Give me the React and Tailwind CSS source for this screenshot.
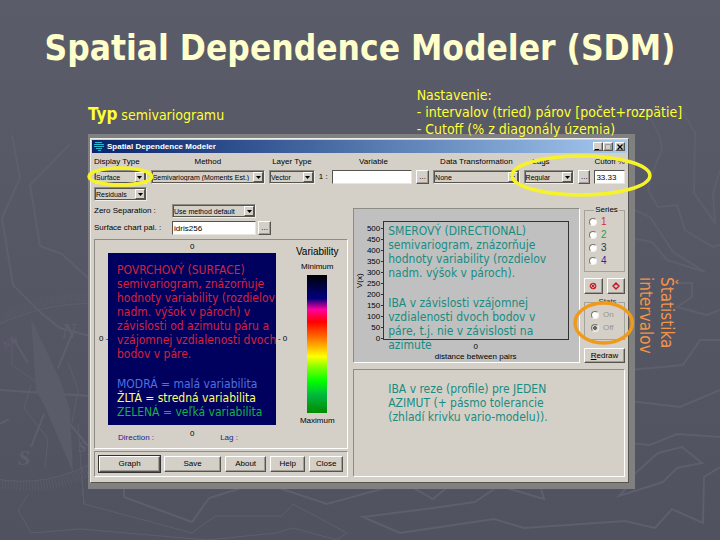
import React from 'react';

const annotation = 'font-["DejaVu_Sans_Condensed","DejaVu_Sans",sans-serif]';

const Ellipse = ({ className, color }) => (
    <svg
        className={`absolute pointer-events-none overflow-visible z-10 ${className}`}
        viewBox="0 0 100 100"
        preserveAspectRatio="none"
        aria-hidden="true"
    >
        <ellipse cx="50" cy="50" rx="50" ry="50" fill="none" stroke={color} strokeWidth="3.5" vectorEffect="non-scaling-stroke" />
    </svg>
);

const Select = ({ label, value, className = '' }) => (
    <div className={`relative h-[14px] border border-t-[#8f8c86] border-l-[#8f8c86] border-b-[#efede8] border-r-[#efede8] ${className}`}>
        <select
            aria-label={label}
            className="block w-full h-full appearance-none bg-[#d4d0c8] border border-[#56544f] text-[7px] leading-none overflow-hidden"
        >
            <option>{value}</option>
        </select>
        <span className="absolute top-px right-px bottom-px w-[10px] bg-[#d4d0c8] border border-t-white border-l-white border-b-[#56544f] border-r-[#56544f] flex items-center justify-center pointer-events-none">
            <svg width="5" height="3" viewBox="0 0 5 3"><path d="M0 0h5L2.5 3z" fill="#000" /></svg>
        </span>
    </div>
);

const Button = ({ children, className = '', ...rest }) => (
    <button
        type="button"
        className={`bg-[#d4d0c8] border border-t-white border-l-white border-b-[#56544f] border-r-[#56544f] shadow-[inset_-1px_-1px_0_#a09d97] flex items-center justify-center leading-none ${className}`}
        {...rest}
    >
        {children}
    </button>
);

const input = 'block w-full min-w-0 h-[14px] bg-white border border-t-[#56544f] border-l-[#56544f] border-b-[#e8e6e0] border-r-[#e8e6e0] pl-px leading-none';
const panel = 'border border-t-[#8f8c86] border-l-[#8f8c86] border-b-white border-r-white';

const Background = () => (
    <svg className="absolute inset-0 w-full h-full -z-10" viewBox="0 0 720 540" preserveAspectRatio="xMidYMid slice" fill="none" stroke="#5e5f6d" aria-hidden="true">
        <path d="M12 135L20 178L2 218L13 285L40 312L60 328L90 336" strokeWidth="2" />
        <path d="M70 144L30 185L40 246L62 254L90 280" strokeWidth="2" />
        <path d="M0 390L90 396M31 447L44 414M58 368L72 334M14 340L28 363M70 424L88 446M0 424L9 419" strokeWidth="2" />
        <path d="M12 335L12 365L38 383M68 362L78 390L72 423M31 385L24 408L48 439L45 468M78 424L84 505" />
        {/* compass ring */}
        <path d="M-20 334Q40 288 100 300" stroke="#5a5b68" strokeWidth="9" strokeDasharray="1 2" />
        <path d="M-10 482Q50 496 100 465" stroke="#5a5b68" strokeWidth="10" strokeDasharray="1 2" />
        <path d="M-20 334Q40 300 100 304M-10 478Q50 490 100 458" />
        {/* compass needle */}
        <path d="M31 318L36 390L45 407L73 472L70 410L60 380Z" fill="#5b5c69" stroke="none" />
        <g fill="#5e5f6d" stroke="none" className="font-['Liberation_Serif',serif] font-bold italic">
            <text x="62" y="338" fontSize="20">N</text>
            <text x="18" y="465" fontSize="22">S</text>
            <text x="78" y="452" fontSize="15">S</text>
            <text x="5" y="349" fontSize="10" transform="rotate(-28 5 349)">NW</text>
        </g>
        {/* coast lines */}
        <path d="M124 488L124 497L192 522L209 498L251 485M270 485L327 504L396 485M408 485L433 499L450 485M500 485L475 502L433 508L363 517L400 533L494 519L524 528L625 521L655 528L672 509L703 523L704 477L720 467M500 486L544 499L540 485" strokeWidth="2" />
        <path d="M647 110L660 137L662 150L652 173L648 190L658 207L677 205L685 230L713 247L720 245M683 112L695 133L694 193L715 223L713 193L720 170" strokeWidth="2" />
        <path d="M630 208L650 217L673 252L705 272L667 260L652 242L630 238M677 283L692 283L692 297L677 307L707 315L720 310" strokeWidth="2" />
        <path d="M630 370L683 365L700 340L720 340M630 401L680 407L720 390M630 443L650 445L677 434L720 437M630 478L658 453L682 447L702 463L677 468L663 482L619 496L629 485" strokeWidth="2" />
        <path d="M82 480L84 504L192 533L215 516L282 516L293 504L347 533L337 540M31 533L18 510L28 495M31 533L80 529L207 540L276 533L293 528L337 540" />
    </svg>
);

const yTicks = [500, 450, 400, 350, 300, 250, 200, 150, 100, 50, 0];

const series = [
    { id: 1, color: 'text-[#d02f2f]' },
    { id: 2, color: 'text-[#2f9a3c]' },
    { id: 3, color: 'text-[#303030]' },
    { id: 4, color: 'text-[#2c2ca0]' },
];

const radio = 'appearance-none w-2 h-2 rounded-full bg-white border border-t-[#77756f] border-l-[#77756f] border-b-[#f2f0ea] border-r-[#f2f0ea]';

const MarkIcon = ({ cross }) => (
    <svg width="8" height="8" viewBox="0 0 8 8" fill="none" stroke="#c4202c" strokeWidth="1.5" aria-hidden="true">
        {cross ? (
            <>
                <circle cx="4" cy="4" r="2.8" strokeWidth="1.1" />
                <path d="M2.2 2.2L5.8 5.8M5.8 2.2L2.2 5.8" strokeWidth="1.1" />
            </>
        ) : (
            <path d="M4 1L7 4L4 7L1 4Z" />
        )}
    </svg>
);

const Toolbar = () => (
    <div className="grid grid-cols-[53fr_115fr_46fr_94fr_13fr_87fr_102fr] gap-x-1 text-center">
        <div>
            <div className="h-4 leading-4 text-left whitespace-nowrap">Display Type</div>
            <div className="relative">
                <Select label="Display Type" value="Surface" />
                <Ellipse className="-left-[5px] -top-[2px] w-[119%] h-[17px]" color="#f7f32a" />
            </div>
        </div>
        <div>
            <div className="h-4 leading-4">Method</div>
            <Select label="Method" value="Semivariogram (Moments Est.)" />
        </div>
        <div>
            <div className="h-4 leading-4 whitespace-nowrap">Layer Type</div>
            <Select label="Layer Type" value="Vector" />
        </div>
        <div>
            <label htmlFor="variable" className="block h-4 leading-4 pl-4">Variable</label>
            <div className="flex items-center gap-1">
                <span className="whitespace-nowrap">1 :</span>
                <input id="variable" className={input} />
            </div>
        </div>
        <Button className="h-[14px] mt-4" aria-label="Browse variable">...</Button>
        <div>
            <div className="h-4 leading-4 whitespace-nowrap">Data Transformation</div>
            <Select label="Data Transformation" value="None" />
        </div>
        <div className="relative grid grid-cols-[54fr_13fr_27fr] gap-x-1">
            <div>
                <div className="h-4 leading-4 pr-4">Lags</div>
                <Select label="Lags" value="Regular" />
            </div>
            <Button className="h-[14px] mt-4" aria-label="Lag options">...</Button>
            <div>
                <label htmlFor="cutoff" className="flex justify-end h-4 leading-4 whitespace-nowrap">Cutoff %</label>
                <input id="cutoff" className={input} defaultValue="33.33" />
            </div>
            <Ellipse className="-left-[12px] top-[2px] w-[136%] h-[39px]" color="#f7f32a" />
        </div>
    </div>
);

const SurfaceChart = () => (
    <div className={`${panel} flex h-[210px] pl-1`}>
        <div className="grid grid-cols-[9px_1fr_11px] grid-rows-[13px_172px_22px] flex-1 items-center text-center whitespace-nowrap">
            <span className="col-start-2 leading-3">0</span>
            <span className="col-start-1 text-left">0 -</span>
            <div className={`${annotation} bg-[#00005e] h-full text-left text-[12px] leading-[14px] pl-[9px] pt-[10px] flex flex-col`}>
                <p className="text-[#d8203c]">
                    POVRCHOVÝ (SURFACE)<br />
                    semivariogram, znázorňuje<br />
                    hodnoty variability (rozdielov<br />
                    nadm. výšok v pároch) v<br />
                    závislosti od azimutu páru a<br />
                    vzájomnej vzdialenosti dvoch<br />
                    bodov v páre.
                </p>
                <p className="text-[#5070e0] mt-4">MODRÁ = malá variabilita</p>
                <p className="text-[#ffff66]">ŽLTÁ = stredná variabilita</p>
                <p className="text-[#18b048]">ZELENÁ = veľká variabilita</p>
            </div>
            <span className="text-right">- 0</span>
            <div className="col-start-2 grid grid-cols-3 h-full leading-[18px]">
                <span className="text-[#23238e] pt-1">Direction :</span>
                <span>0</span>
                <span className="text-[#23238e] text-left pt-1">Lag :</span>
            </div>
        </div>
        <div className="w-[60px] flex flex-col items-center pt-1">
            <span className="text-[10px] leading-[14px] pt-px">Variability</span>
            <span className="leading-4">Minimum</span>
            <div className="w-5 h-[138px] bg-[linear-gradient(#000_0%,#00005e_12%,#00007a_17%,#ff00a0_25%,#ff0000_34%,#ff8000_47%,#ffff00_59%,#80ff00_67%,#00ff00_77%,#00b840_87%,#008a00_100%)]"></div>
            <span className="leading-4">Maximum</span>
        </div>
    </div>
);

const DirectionalChart = () => (
    <div className={`${panel} bg-[#c0c0c0] h-[155px] pl-[2px] pt-3 pr-[10px]`}>
        <div className="flex h-[119px]">
            <span className="[writing-mode:vertical-rl] rotate-180 text-center w-2 leading-2">V(x)</span>
            <div className="w-[19px] -mb-1 flex flex-col justify-between pt-[2px]">
                {yTicks.map((t) => (
                    <span key={t} className="flex justify-end items-center gap-px leading-[11px] h-[11px]">
                        {t}<i className="w-[2px] h-px bg-[#333]"></i>
                    </span>
                ))}
            </div>
            <div className={`${annotation} flex-1 border border-[#333] text-[#188c80] text-[12px] leading-[14px] pl-1 pt-[2px] whitespace-nowrap`}>
                <p>
                    SMEROVÝ (DIRECTIONAL)<br />
                    semivariogram, znázorňuje<br />
                    hodnoty variability (rozdielov<br />
                    nadm. výšok v pároch).
                </p>
                <p className="mt-4">
                    IBA v závislosti vzájomnej<br />
                    vzdialenosti dvoch bodov v<br />
                    páre, t.j. nie v závislosti na<br />
                    azimute
                </p>
            </div>
        </div>
        <div className="pl-[26px] text-center leading-[10px] pt-[2px]">
            <div>0</div>
            <div>distance between pairs</div>
        </div>
    </div>
);

const SideControls = () => (
    <div className="flex flex-col">
        <fieldset className="border border-[#a5a29c] h-[66px] -mt-[2px] pt-px pl-1 min-w-0">
            <legend className="mx-auto leading-2 px-px">Series</legend>
            <div className="flex flex-col">
                {series.map((s) => (
                    <label key={s.id} className="flex items-center gap-1 h-[13px] text-[10px]">
                        <input type="radio" name="series" className={radio} />
                        <span className={s.color}>{s.id}</span>
                    </label>
                ))}
            </div>
        </fieldset>
        <div className="grid grid-cols-2 gap-1 mt-[6px]">
            <Button className="h-4" aria-label="Clear series"><MarkIcon cross /></Button>
            <Button className="h-4" aria-label="Mark series"><MarkIcon /></Button>
        </div>
        <div className="relative mt-1">
            <fieldset className="border border-[#a5a29c] h-[42px] pt-[2px] pl-[6px] min-w-0 text-[#98958f]">
                <legend className="mx-auto leading-2 px-px text-[#333]">Stats</legend>
                <label className="flex items-center gap-1 h-[13px]">
                    <input type="radio" name="stats" disabled className={radio} />On
                </label>
                <label className="flex items-center gap-1 h-[13px]">
                    <input type="radio" name="stats" disabled defaultChecked className={`${radio} bg-[radial-gradient(#666_0_2px,#d4d0c8_2px)]`} />Off
                </label>
            </fieldset>
            <Ellipse className="-left-[9px] top-[5px] w-[140%] h-[40px]" color="#f09a1c" />
        </div>
        <Button className="h-[15px] mt-auto"><span><u>R</u>edraw</span></Button>
    </div>
);

const ModelerWindow = () => (
    <section className="flex-1 min-w-0 bg-[#808080] pt-1 pl-[2px] pr-[6px] pb-[6px]">
        <div className="bg-[#d4d0c8] border border-t-[#efede8] border-l-[#efede8] border-b-[#56544f] border-r-[#56544f] p-px pb-[5px] text-black font-['Liberation_Sans',sans-serif] text-[8px] leading-3">
            <header className="flex items-center h-[13px] px-[2px] gap-[3px] bg-linear-to-r from-[#0a246a] to-[#a6caf0]">
                <svg width="10" height="10" viewBox="0 0 10 10" stroke="#27b5cf" strokeWidth="1" aria-hidden="true">
                    <path d="M1 .5h7M0 2.5h10M0 4.5h10M2 6.5h6M4 8.5h3" />
                </svg>
                <h2 className="flex-1 text-white font-bold">Spatial Dependence Modeler</h2>
                <div className="flex">
                    <Button className="w-[10px] h-[9px]" aria-label="Minimize"><svg width="6" height="6" viewBox="0 0 6 6" stroke="#000"><path d="M0 5.5h4" /></svg></Button>
                    <Button className="w-[10px] h-[9px]" aria-label="Maximize"><svg width="6" height="6" viewBox="0 0 6 6" stroke="#999" fill="none"><path d="M.5 .5h5v5h-5z" /></svg></Button>
                    <Button className="w-[10px] h-[9px] ml-[2px]" aria-label="Close window"><svg width="6" height="6" viewBox="0 0 6 6" stroke="#000" strokeWidth="1.3"><path d="M.5 .5l5 5M5.5 .5l-5 5" /></svg></Button>
                </div>
            </header>
            <div className="px-[2px] pt-px">
                <Toolbar />
                <div className="grid grid-cols-[254fr_272fr] gap-x-[5px]">
                    <div className="flex flex-col">
                        <div className="pt-[3px] w-[21%]"><Select label="Residuals" value="Residuals" /></div>
                        <div className="grid grid-cols-[78fr_84fr_15fr_77fr] gap-y-[3px] pt-[3px] pb-1 items-center">
                            <span className="whitespace-nowrap">Zero Separation :</span>
                            <Select label="Zero Separation" value="Use method default" />
                            <label htmlFor="palette" className="col-start-1 whitespace-nowrap">Surface chart pal. :</label>
                            <input id="palette" className={input} defaultValue="idris256" />
                            <Button className="h-[14px] ml-[2px]" aria-label="Browse palette">...</Button>
                        </div>
                        <SurfaceChart />
                        <div className={`${panel} grid grid-cols-[61fr_57fr_41fr_35fr_34fr] gap-1 px-1 py-1 mt-[2px]`}>
                            <Button className="h-4 outline outline-[#333]">Graph</Button>
                            <Button className="h-4">Save</Button>
                            <Button className="h-4">About</Button>
                            <Button className="h-4">Help</Button>
                            <Button className="h-4">Close</Button>
                        </div>
                    </div>
                    <div className="flex flex-col pt-6">
                        <div className="grid grid-cols-[227fr_41fr] gap-x-1">
                            <DirectionalChart />
                            <SideControls />
                        </div>
                        <div className={`${panel} ${annotation} flex-1 mt-[6px] pl-[34px] pt-3 text-[12px] leading-[14px] text-[#188c80] whitespace-nowrap`}>
                            IBA v reze (profile) pre JEDEN<br />
                            AZIMUT (+ pásmo tolerancie<br />
                            (zhladí krivku vario-modelu)).
                        </div>
                    </div>
                </div>
            </div>
        </div>
    </section>
);

const App = () => {
    return (
        <main className={`relative isolate overflow-hidden min-h-screen bg-linear-to-b from-[#5b5c69] to-[#505260] ${annotation}`}>
            <Background />
            <h1 className="pt-7 text-center text-[35px] leading-10 font-bold text-[#ffffcc]">Spatial Dependence Modeler (SDM)</h1>

            {/* notes above the window */}
            <div className="relative z-10 flex pl-[88px] pt-[19px] h-[66px] text-[14px] leading-[17px] text-[#ffff33] whitespace-nowrap">
                <p className="w-[52%] pt-[19px]"><span className="text-[17px] font-bold">Typ</span> semivariogramu</p>
                <p>
                    Nastavenie:<br />
                    - intervalov (tried) párov [počet+rozpätie]<br />
                    - Cutoff (% z diagonály územia)
                </p>
            </div>

            <div className="flex pl-[88px]">
                <ModelerWindow />
                <p className="w-[85px] pt-[143px] text-[17px] leading-[21px] text-[#f0944a]">
                    <span className="block [writing-mode:vertical-rl]">Štatistika<br />intervalov</span>
                </p>
            </div>
        </main>
    );
};

export default App;
